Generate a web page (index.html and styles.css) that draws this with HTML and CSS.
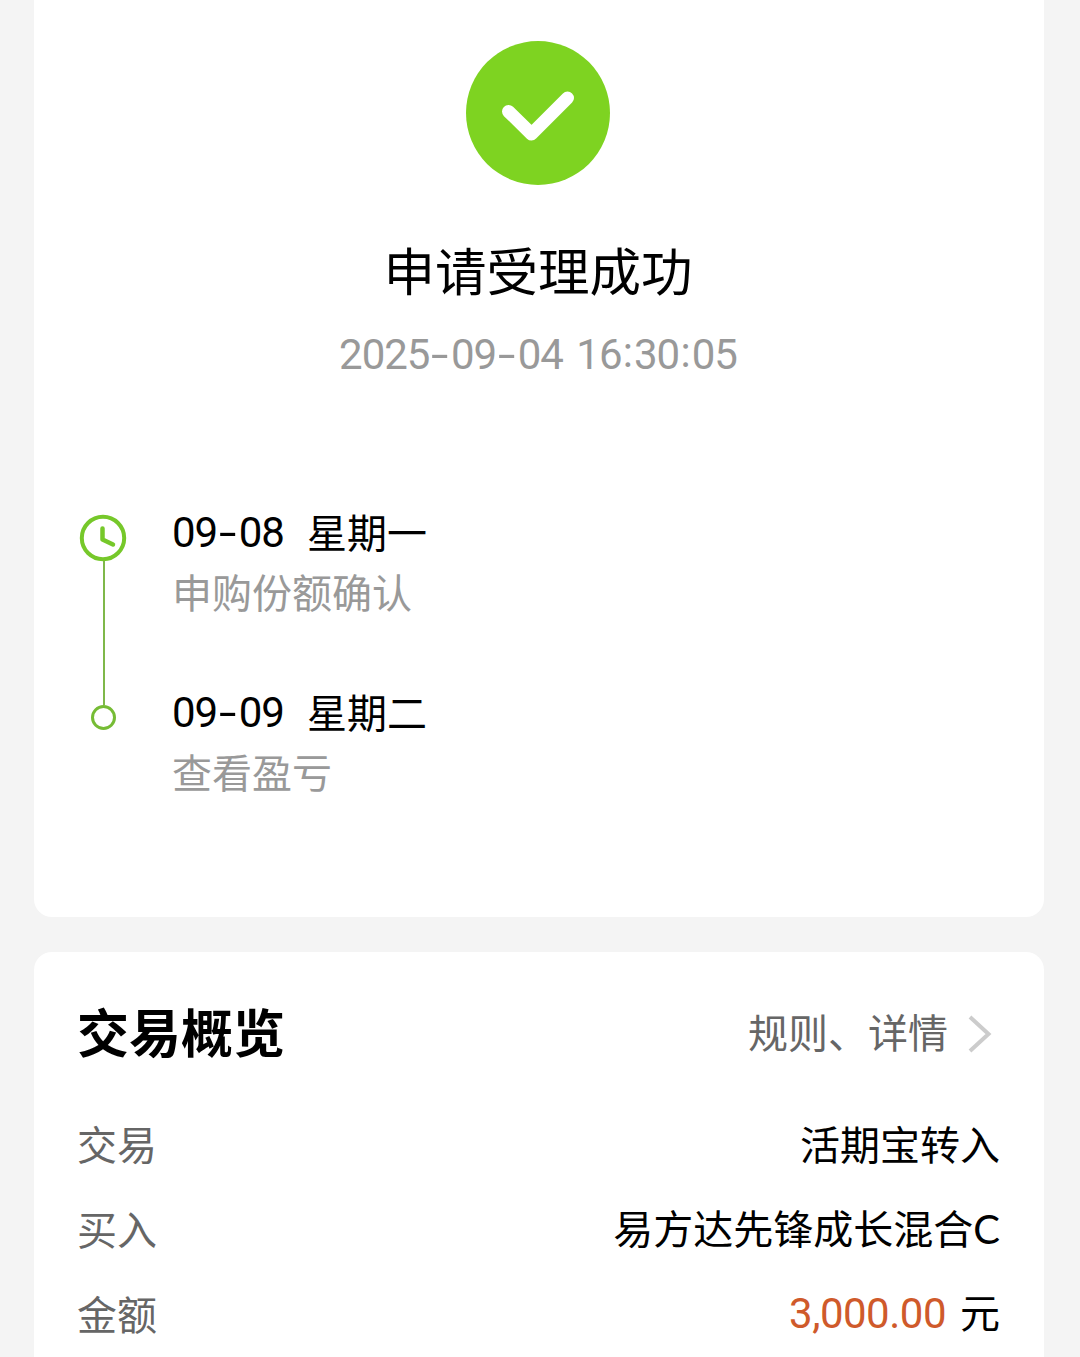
FILE: index.html
```
<!DOCTYPE html>
<html lang="zh-CN">
<head>
    <meta charset="UTF-8">
    <meta name="viewport" content="width=device-width, initial-scale=1.0">
    <title>申请受理成功</title>
    <link rel="stylesheet" href="styles.css">
</head>
<body>
    <section class="card result-card">
        <svg class="success-icon" viewBox="0 0 144 144">
            <circle cx="72" cy="72" r="72" fill="#7ed321"/>
            <path d="M42.5 70.5L65.5 93L101.5 57" fill="none" stroke="#fff" stroke-width="13" stroke-linecap="round" stroke-linejoin="round"/>
        </svg>
        <h1 class="result-title">申请受理成功</h1>
        <p class="result-time num">2025<span class="dash">-</span>09<span class="dash">-</span>04 16<span class="colon">:</span>30<span class="colon">:</span>05</p>

        <ol class="timeline">
            <li class="step">
                <div class="step-marker">
                    <svg class="clock-icon" viewBox="0 0 48 48" fill="none" stroke="#76c82a">
                        <circle cx="24" cy="24" r="21.2" stroke-width="4"/>
                        <path d="M23.500 14.500V25.500L34 30.500" stroke-width="4.500" stroke-linecap="round" stroke-linejoin="round"/>
                    </svg>
                    <span class="step-line"></span>
                </div>
                <div class="step-body">
                    <p class="step-date"><span class="num">09<span class="dash">-</span>08</span><span class="weekday">星期一</span></p>
                    <p class="step-desc">申购份额确认</p>
                </div>
            </li>
            <li class="step">
                <div class="step-marker">
                    <span class="step-dot"></span>
                </div>
                <div class="step-body">
                    <p class="step-date"><span class="num">09<span class="dash">-</span>09</span><span class="weekday">星期二</span></p>
                    <p class="step-desc">查看盈亏</p>
                </div>
            </li>
        </ol>
    </section>

    <section class="card overview-card">
        <div class="overview-header">
            <h2 class="overview-title">交易概览</h2>
            <a class="overview-link">
                <span>规则、详情</span>
                <svg class="arrow-icon" viewBox="0 0 24 38">
                    <path d="M2 2L20.500 19L2 36" fill="none" stroke="#ccc" stroke-width="4"/>
                </svg>
            </a>
        </div>
        <div class="row">
            <span class="label">交易</span>
            <span class="value">活期宝转入</span>
        </div>
        <div class="row">
            <span class="label">买入</span>
            <span class="value">易方达先锋成长混合<span class="latin">C</span></span>
        </div>
        <div class="row">
            <span class="label">金额</span>
            <span class="value"><span class="amount num">3,000.00</span>元</span>
        </div>
    </section>
</body>
</html>
```
FILE: styles.css
```
* {
    box-sizing: border-box;
    margin: 0;
    padding: 0;
}

body {
    display: flex;
    flex-direction: column;
    gap: 35px;
    height: 1357px;
    padding: 0 36px 0 34px;
    overflow: hidden;
    background: #f4f4f4;
    color: #000;
    font-family: "Noto Sans CJK SC", sans-serif;
    font-size: 40px;
    line-height: 60px;
}

.card {
    flex-shrink: 0;
    background: #fff;
    border-radius: 18px;
}

.num {
    font-family: Roboto, "Noto Sans CJK SC", sans-serif;
    font-size: 42px;
    letter-spacing: -1px;
}

/* wide dash, as broad as a digit */
.dash {
    display: inline-block;
    width: 21.5px;
    letter-spacing: 0;
    text-align: center;
    transform: scaleX(1.5);
}

.colon {
    display: inline-block;
    width: 12.5px;
    letter-spacing: 0;
    text-align: center;
    transform: translateY(-2px);
}

.result-card {
    display: flex;
    flex-direction: column;
    align-items: center;
    height: 917px;
    padding-top: 41px;
    border-radius: 0 0 18px 18px;
}

.success-icon {
    width: 144px;
    height: 144px;
    margin-right: 2px;
}

.result-title {
    margin: 44px 2px 0 0;
    font-size: 51.5px;
    font-weight: 400;
    line-height: 80px;
}

.result-time {
    margin: 16px 2px 0 0;
    color: #999;
    line-height: 60px;
    word-spacing: 4px;
}

.timeline {
    align-self: stretch;
    margin-top: 118px;
    padding-left: 45px;
    list-style: none;
}

.step {
    display: flex;
    gap: 45px;
    height: 180px;
}

.step-marker {
    display: flex;
    flex-direction: column;
    align-items: center;
    width: 48px;
    padding-top: 11px;
}

.clock-icon {
    width: 48px;
    height: 48px;
}

.step-line {
    width: 2px;
    flex: 1;
    margin: -1px 0 -22px 2px;
    background: #7fb84a;
}

.step-dot {
    width: 25px;
    height: 25px;
    margin: 11px 0 0 1px;
    border: 3px solid #76bc35;
    border-radius: 50%;
}

.step-date {
    display: flex;
    gap: 23px;
    height: 60px;
}

.weekday {
    margin-top: -2px;
}

.step-desc {
    margin-top: -2px;
    color: #999;
}

.overview-card {
    height: 440px;
    padding: 39px 44px 0;
}

.overview-header {
    display: flex;
    justify-content: space-between;
    align-items: center;
    height: 80px;
    margin-bottom: 29px;
}

.overview-title {
    margin-left: -1px;
    font-size: 52px;
    font-weight: 700;
}

.overview-link {
    display: flex;
    align-items: center;
    gap: 20px;
    padding-right: 8px;
    color: #666;
}

.arrow-icon {
    width: 24px;
    height: 38px;
    margin-top: 5px;
}

.row {
    display: flex;
    justify-content: space-between;
    align-items: center;
    height: 85px;
}

.label {
    margin-left: -1px;
    color: #666;
}

.latin {
    font-family: Lato, sans-serif;
}

.amount {
    margin-right: 14px;
    color: #cf5a2b;
    letter-spacing: -0.5px;
}
```
